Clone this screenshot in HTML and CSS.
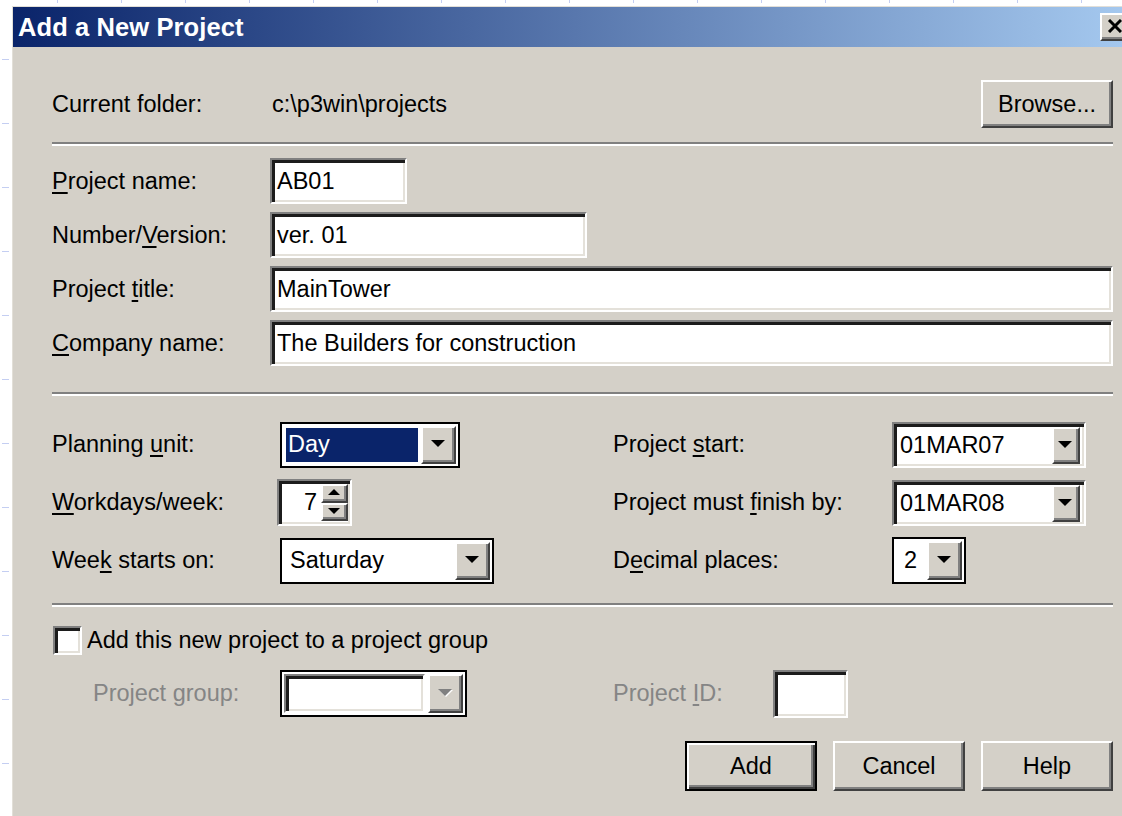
FILE: index.html
```html
<!DOCTYPE html>
<html lang="en">
<head>
<meta charset="utf-8">
<title>Add a New Project</title>
<link rel="stylesheet" href="styles.css">
</head>
<body>
<div class="desk">
  <div class="rail"></div>
  <div class="column">
    <div class="ruler"></div>
    <div class="dialog">
      <div class="titlebar">
        <span class="title">Add a New Project</span>
        <div class="close btn">
          <svg width="16" height="14" viewBox="0 0 16 14"><path d="M2 1 L14 13 M14 1 L2 13" stroke="#000" stroke-width="3" fill="none"/></svg>
        </div>
      </div>

      <div class="body">
        <div class="folder-row">
          <span class="lbl folder-lbl">Current folder:</span>
          <span class="path">c:\p3win\projects</span>
          <div class="btn browse">Browse...</div>
        </div>

        <div class="sep sep-a"></div>

        <div class="fields">
          <span class="lbl"><u>P</u>roject name:</span>
          <div class="edit w-name">AB01</div>
          <span class="lbl">Number/<u>V</u>ersion:</span>
          <div class="edit w-num">ver. 01</div>
          <span class="lbl">Project <u>t</u>itle:</span>
          <div class="edit">MainTower</div>
          <span class="lbl"><u>C</u>ompany name:</span>
          <div class="edit">The Builders for construction</div>
        </div>

        <div class="sep sep-b"></div>

        <div class="sched">
          <span class="lbl">Planning <u>u</u>nit:</span>
          <div class="combo framed w-plan">
            <div class="value selected">Day</div>
            <div class="btn dropbtn"></div>
          </div>
          <span class="lbl">Project <u>s</u>tart:</span>
          <div class="combo edit-combo">
            <div class="value">01MAR07</div>
            <div class="btn dropbtn slim"></div>
          </div>

          <span class="lbl"><u>W</u>orkdays/week:</span>
          <div class="spin">
            <div class="value">7</div>
            <div class="spin-btns">
              <div class="btn spin-up"></div>
              <div class="btn spin-down"></div>
            </div>
          </div>
          <span class="lbl">Project must <u>f</u>inish by:</span>
          <div class="combo edit-combo">
            <div class="value">01MAR08</div>
            <div class="btn dropbtn slim"></div>
          </div>

          <span class="lbl">Wee<u>k</u> starts on:</span>
          <div class="combo framed w-week">
            <div class="value">Saturday</div>
            <div class="btn dropbtn"></div>
          </div>
          <span class="lbl">D<u>e</u>cimal places:</span>
          <div class="combo framed w-dec">
            <div class="value">2</div>
            <div class="btn dropbtn"></div>
          </div>
        </div>

        <div class="sep sep-c"></div>

        <div class="check-row">
          <div class="checkbox"></div>
          <span class="lbl">Add this new project to a project group</span>
        </div>

        <div class="group-row">
          <span class="lbl off indent">Project group:</span>
          <div class="combo framed w-group">
            <div class="value sunk"></div>
            <div class="btn dropbtn off"></div>
          </div>
          <span class="lbl off">Project <u>I</u>D:</span>
          <div class="edit w-id"></div>
        </div>

        <div class="actions">
          <div class="btn push default">Add</div>
          <div class="btn push">Cancel</div>
          <div class="btn push">Help</div>
        </div>
      </div>
    </div>
  </div>
</div>
</body>
</html>
```

FILE: styles.css
```css
html, body {
  margin: 0;
  padding: 0;
}

body {
  width: 1122px;
  height: 816px;
  overflow: hidden;
  background: #fff;
  font-family: "Liberation Sans", Arial, sans-serif;
  font-size: 23.5px;
  color: #000;
}

.desk {
  display: flex;
  height: 816px;
}

/* grid ticks of the sheet behind the dialog */
.rail {
  width: 12px;
  flex-shrink: 0;
  background-image: linear-gradient(to bottom, #c4cef2 0 1px, transparent 1px);
  background-size: 7px 64px;
  background-repeat: repeat-y;
  background-position: 2px 59px;
}

.column {
  display: flex;
  flex-direction: column;
  flex-shrink: 0;
}

.ruler {
  height: 6px;
  flex-shrink: 0;
  background-image: linear-gradient(to right, #c4cef2 0 1px, transparent 1px);
  background-size: 64px 3px;
  background-repeat: repeat-x;
  background-position: 45px 0;
}

.dialog {
  width: 1124px;
  flex: 1;
  background: #d4d0c8;
  border-top: 1px solid #e2dfd8;
  border-left: 1px solid #e2dfd8;
}

.titlebar {
  height: 40px;
  display: flex;
  align-items: center;
  padding: 0 5px;
  background: linear-gradient(to right, #0a246a, #a6caf0);
}

.title {
  color: #fff;
  font-weight: bold;
  font-size: 25.5px;
  letter-spacing: 0.1px;
}

/* raised 3D bevel */
.btn {
  box-sizing: border-box;
  background: #d4d0c8;
  border: 2px solid;
  border-color: #fff #404040 #404040 #fff;
  box-shadow: inset -2px -2px 0 #808080;
}

.close {
  margin-left: auto;
  width: 32px;
  height: 28px;
  display: flex;
  align-items: center;
  justify-content: center;
  padding: 0 2px 2px 0;
}

.body {
  padding: 33px 24px 0 39px;
}

.lbl {
  white-space: nowrap;
}

.lbl u,
.lbl u {
  text-decoration-thickness: 2px;
  text-underline-offset: 3px;
}

.folder-row {
  display: flex;
  align-items: center;
  height: 48px;
}

.folder-lbl {
  width: 220px;
}

.browse,
.push {
  width: 132px;
  height: 48px;
  display: flex;
  align-items: center;
  justify-content: center;
}

.browse {
  margin-left: auto;
}

.sep {
  height: 4px;
  box-sizing: border-box;
  border-top: 2px solid #808080;
  border-bottom: 2px solid #fff;
}

.sep-a { margin-top: 14px; }
.sep-b { margin-top: 26px; }
.sep-c { margin-top: 19px; }

/* sunken white field */
.edit,
.spin,
.edit-combo,
.checkbox,
.sunk {
  box-sizing: border-box;
  background: #fff;
  border: 2px solid;
  border-color: #808080 #fff #fff #808080;
  box-shadow: inset 3px 3px 0 #1c1c1c, inset -2px -2px 0 #e4e1da;
}

.edit {
  height: 46px;
  padding-left: 5px;
  display: flex;
  align-items: center;
  white-space: nowrap;
}

.fields {
  display: grid;
  grid-template-columns: 218px 1fr;
  grid-auto-rows: 46px;
  row-gap: 8px;
  margin-top: 12px;
  align-items: center;
}

.w-name { width: 137px; }
.w-num { width: 317px; }

.sched {
  display: grid;
  grid-template-columns: 228px 333px 279px 1fr;
  grid-auto-rows: 47px;
  row-gap: 11px;
  margin-top: 25px;
  align-items: center;
  justify-items: start;
}

.combo {
  display: flex;
  box-sizing: border-box;
}

.combo .value {
  flex: 1;
  display: flex;
  align-items: center;
  white-space: nowrap;
}

.framed {
  height: 46px;
  border: 2px solid #000;
  background: #fff;
  padding: 2px;
  gap: 3px;
}

.framed .value {
  padding-left: 6px;
}

.framed .value.selected {
  background: #0a246a;
  color: #fff;
  margin: 2px 0 2px 2px;
  padding-left: 2px;
}

.w-plan { width: 180px; }
.w-week { width: 214px; }
.w-dec { width: 74px; height: 47px; }
.w-dec .value { padding-left: 8px; }

.dropbtn {
  width: 35px;
  display: flex;
  align-items: center;
  justify-content: center;
  padding: 0 2px 2px 0;
}

.dropbtn::after {
  content: "";
  border-left: 7px solid transparent;
  border-right: 7px solid transparent;
  border-top: 7px solid #000;
}

.dropbtn.off::after {
  border-top-color: #808080;
  filter: drop-shadow(1px 1px 0 #fff);
}

.edit-combo {
  width: 194px;
  height: 46px;
  padding: 3px 4px 2px 4px;
}

.edit-combo .value {
  padding-left: 2px;
}

.dropbtn.slim {
  width: 28px;
}

.spin {
  width: 75px;
  height: 47px;
  margin-left: -3px;
  display: flex;
  padding: 3px 2px 3px 5px;
}

.spin .value {
  flex: 1;
  display: flex;
  align-items: center;
  justify-content: flex-end;
  padding-right: 4px;
}

.spin-btns {
  width: 27px;
  display: flex;
  flex-direction: column;
}

.spin-up,
.spin-down {
  flex: 1;
  display: flex;
  align-items: center;
  justify-content: center;
  padding: 0 2px 2px 0;
}

.spin-up::after {
  content: "";
  border-left: 6px solid transparent;
  border-right: 6px solid transparent;
  border-bottom: 6px solid #000;
}

.spin-down::after {
  content: "";
  border-left: 6px solid transparent;
  border-right: 6px solid transparent;
  border-top: 6px solid #000;
}

.check-row {
  display: flex;
  align-items: center;
  gap: 5px;
  height: 29px;
  margin-top: 19px;
}

.checkbox {
  width: 29px;
  height: 29px;
  margin-left: 1px;
}

.group-row {
  display: grid;
  grid-template-columns: 228px 333px 160px 1fr;
  align-items: center;
  justify-items: start;
  height: 49px;
  margin-top: 14px;
}

.off {
  color: #858585;
}

.indent {
  padding-left: 41px;
}

.w-group {
  width: 187px;
  height: 47px;
}

.w-group .value.sunk {
  padding: 0;
}

.w-id {
  width: 75px;
  height: 48px;
}

.actions {
  display: flex;
  justify-content: flex-end;
  gap: 16px;
  margin-top: 23px;
}

.push {
  height: 50px;
}

.push.default {
  border: 2px solid #000;
  box-shadow: inset 2px 2px 0 #fff, inset -2px -2px 0 #404040, inset -4px -4px 0 #808080;
}
```
